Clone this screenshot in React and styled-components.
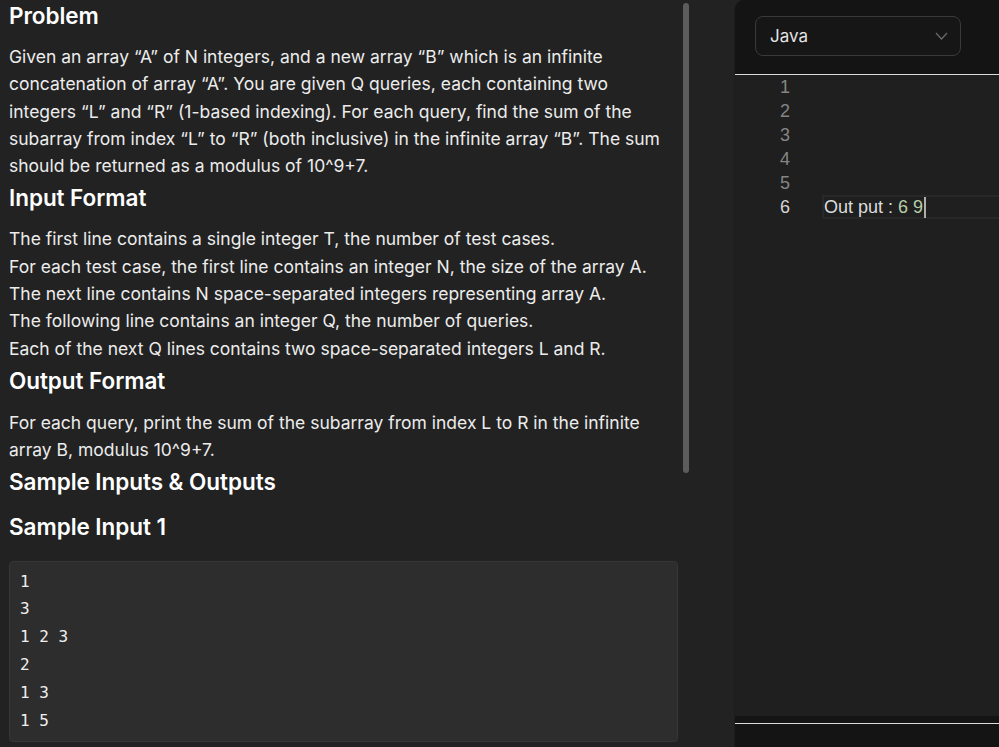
import React from "react";
import styled, { createGlobalStyle } from "styled-components";

const Global = createGlobalStyle`
  html, body { margin: 0; padding: 0; background: #222222; height: 100%; overflow: hidden; }
  #root { height: 100%; }
  * { box-sizing: border-box; }
`;

const Page = styled.div`
  display: flex;
  height: 747px;
  width: 999px;
  background: #222222;
  font-family: Inter, "Noto Sans", sans-serif;
  color: #f2f2f2;
`;

const LeftPane = styled.div`
  position: relative;
  width: 734px;
  flex: none;
  height: 100%;
  overflow: hidden;
`;

const Content = styled.div`
  width: 700px;
  padding: 3px 0 0 9px;
`;

const Scrollbar = styled.div`
  position: absolute;
  left: 683px;
  top: 3px;
  width: 6px;
  height: 470px;
  border-radius: 3px;
  background: #5c5c5c;
`;

const Heading = styled.h3`
  margin: ${(p) => p.$top ?? 6}px 0 ${(p) => p.$bottom ?? 14}px;
  font-size: 22.5px;
  line-height: 26px;
  font-weight: 600;
  color: #ffffff;
  letter-spacing: -0.05px;
`;

const Para = styled.p`
  margin: 0;
  font-size: 17.5px;
  line-height: 27.3px;
  color: #ececec;
  white-space: nowrap;
`;

const CodeBox = styled.pre`
  margin: 0;
  width: 669px;
  padding: 6px 10px 7px;
  background: #2d2d2d;
  border: 1px solid #363636;
  border-radius: 4px;
  font-family: "DejaVu Sans Mono", "Liberation Mono", monospace;
  font-size: 16px;
  line-height: 27.8px;
  color: #f0f0f0;
`;

const RightPane = styled.div`
  flex: 1;
  display: flex;
  flex-direction: column;
  height: 100%;
  background: #1f1f1f;
  border-left: 1px solid #1a1e1e;
  border-top-left-radius: 10px;
  overflow: hidden;
`;

const EditorHeader = styled.div`
  height: 75px;
  flex: none;
  background: #141414;
  border-bottom: 1px solid #dcdcdc;
  padding: 16px 0 0 20px;
`;

const Select = styled.div`
  width: 206px;
  height: 40px;
  display: flex;
  align-items: center;
  justify-content: space-between;
  padding: 0 12px 0 14px;
  border: 1px solid #3a3a3a;
  border-radius: 8px;
  background: #161616;
  font-size: 17px;
  color: #e4e4e4;
`;

const Editor = styled.div`
  flex: 1;
  background: #1f1f1f;
`;

const Line = styled.div`
  display: flex;
  height: 24px;
  align-items: stretch;
  font-family: "Liberation Sans", Arial, sans-serif;
  font-size: 18px;
`;

const Gutter = styled.div`
  width: 87px;
  flex: none;
  padding-left: 45px;
  line-height: 24px;
  color: ${(p) => (p.$active ? "#d4d4d4" : "#858585")};
`;

const CodeText = styled.div`
  flex: 1;
  display: flex;
  align-items: center;
  line-height: 20px;
  color: #dcdcdc;
  border: 2px solid ${(p) => (p.$active ? "#282828" : "transparent")};
  border-right: none;
`;

const Num = styled.span`
  color: #b5cea8;
`;

const Cursor = styled.span`
  display: inline-block;
  width: 2px;
  height: 21px;
  margin-left: 1px;
  background: #aeafad;
`;

const Footer = styled.div`
  height: 31px;
  flex: none;
  background: #141414;
  padding-top: 7px;
`;

const FooterRule = styled.div`
  height: 1px;
  background: #dcdcdc;
`;

const Chevron = () => (
  <svg width="13" height="8" viewBox="0 0 13 8" fill="none">
    <path d="M1 1l5.5 6L12 1" stroke="#6a6a6a" strokeWidth="1.2" />
  </svg>
);

export default function App() {
  return (
    <Page>
      <Global />
      <LeftPane>
        <Content>
          <Heading $top={0}>Problem</Heading>
          <Para>
            Given an array “A” of N integers, and a new array “B” which is an infinite
            <br />
            concatenation of array “A”. You are given Q queries, each containing two
            <br />
            integers “L” and “R” (1-based indexing). For each query, find the sum of the
            <br />
            subarray from index “L” to “R” (both inclusive) in the infinite array “B”. The sum
            <br />
            should be returned as a modulus of 10^9+7.
          </Para>
          <Heading>Input Format</Heading>
          <Para>
            The first line contains a single integer T, the number of test cases.
            <br />
            For each test case, the first line contains an integer N, the size of the array A.
            <br />
            The next line contains N space-separated integers representing array A.
            <br />
            The following line contains an integer Q, the number of queries.
            <br />
            Each of the next Q lines contains two space-separated integers L and R.
          </Para>
          <Heading $top={6} $bottom={15}>Output Format</Heading>
          <Para>
            For each query, print the sum of the subarray from index L to R in the infinite
            <br />
            array B, modulus 10^9+7.
          </Para>
          <Heading $top={5} $bottom={19}>Sample Inputs &amp; Outputs</Heading>
          <Heading $top={0} $bottom={21}>Sample Input 1</Heading>
          <CodeBox>{"1\n3\n1 2 3\n2\n1 3\n1 5"}</CodeBox>
        </Content>
        <Scrollbar />
      </LeftPane>
      <RightPane>
        <EditorHeader>
          <Select>
            <span>Java</span>
            <Chevron />
          </Select>
        </EditorHeader>
        <Editor>
          {[1, 2, 3, 4, 5].map((n) => (
            <Line key={n}>
              <Gutter>{n}</Gutter>
              <CodeText />
            </Line>
          ))}
          <Line>
            <Gutter $active>6</Gutter>
            <CodeText $active>
              <span>Out put :&nbsp;</span>
              <Num>6 9</Num>
              <Cursor />
            </CodeText>
          </Line>
        </Editor>
        <Footer>
          <FooterRule />
        </Footer>
      </RightPane>
    </Page>
  );
}
